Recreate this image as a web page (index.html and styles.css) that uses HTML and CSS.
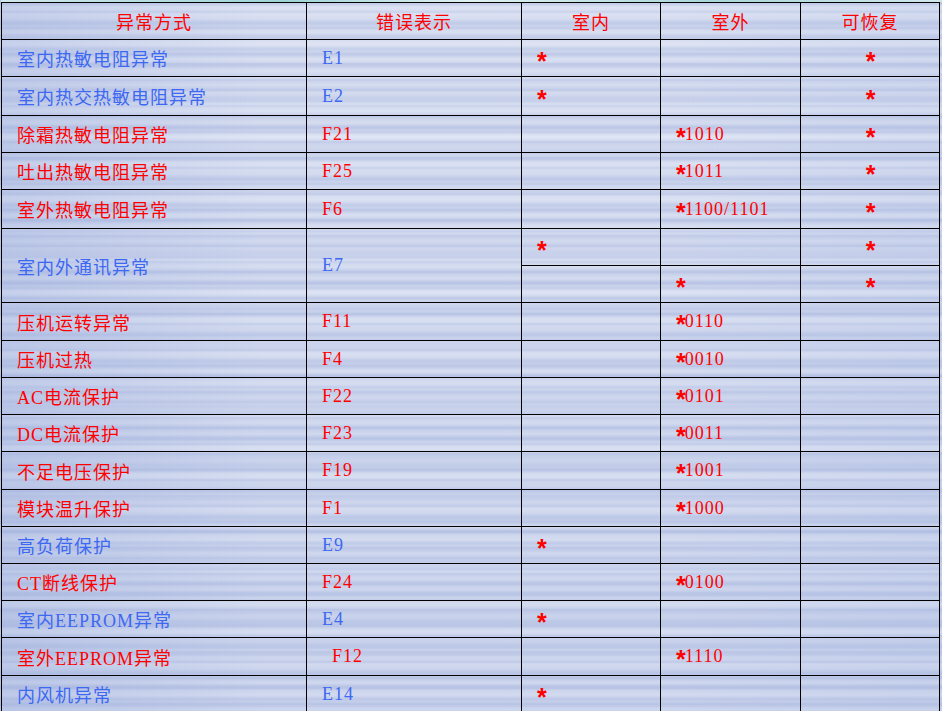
FILE: index.html
```html
<!DOCTYPE html>
<html lang="zh">
<head>
<meta charset="utf-8">
<link rel="stylesheet" href="styles.css">
</head>
<body>
<div class="page">
<div class="topstrip"></div>
<table class="codes">
<colgroup><col class="c1"><col class="c2"><col class="c3"><col class="c4"><col class="c5"></colgroup>
<tr class="h37"><th>异常方式</th><th>错误表示</th><th>室内</th><th>室外</th><th>可恢复</th></tr>
<tr class="h37 blue"><td>室内热敏电阻异常</td><td>E1</td><td class="red"><span class="ast">*</span></td><td></td><td class="ctr red"><span class="ast">*</span></td></tr>
<tr class="h39 blue"><td>室内热交热敏电阻异常</td><td>E2</td><td class="red"><span class="ast">*</span></td><td></td><td class="ctr red"><span class="ast">*</span></td></tr>
<tr class="h37 red"><td>除霜热敏电阻异常</td><td>F21</td><td></td><td><span class="ast">*</span>1010</td><td class="ctr"><span class="ast">*</span></td></tr>
<tr class="h37 red"><td>吐出热敏电阻异常</td><td>F25</td><td></td><td><span class="ast">*</span>1011</td><td class="ctr"><span class="ast">*</span></td></tr>
<tr class="h39 red"><td>室外热敏电阻异常</td><td>F6</td><td></td><td><span class="ast">*</span>1100/1101</td><td class="ctr"><span class="ast">*</span></td></tr>
<tr class="h37 blue"><td rowspan="2">室内外通讯异常</td><td rowspan="2">E7</td><td class="red"><span class="ast">*</span></td><td></td><td class="ctr red"><span class="ast">*</span></td></tr>
<tr class="h37 blue"><td></td><td class="red"><span class="ast">*</span></td><td class="ctr red"><span class="ast">*</span></td></tr>
<tr class="h38 red"><td>压机运转异常</td><td>F11</td><td></td><td><span class="ast">*</span>0110</td><td></td></tr>
<tr class="h37 red"><td>压机过热</td><td>F4</td><td></td><td><span class="ast">*</span>0010</td><td></td></tr>
<tr class="h37 red"><td>AC电流保护</td><td>F22</td><td></td><td><span class="ast">*</span>0101</td><td></td></tr>
<tr class="h37 red"><td>DC电流保护</td><td>F23</td><td></td><td><span class="ast">*</span>0011</td><td></td></tr>
<tr class="h38 red"><td>不足电压保护</td><td>F19</td><td></td><td><span class="ast">*</span>1001</td><td></td></tr>
<tr class="h37 red"><td>模块温升保护</td><td>F1</td><td></td><td><span class="ast">*</span>1000</td><td></td></tr>
<tr class="h37 blue"><td>高负荷保护</td><td>E9</td><td class="red"><span class="ast">*</span></td><td></td><td></td></tr>
<tr class="h37 red"><td>CT断线保护</td><td>F24</td><td></td><td><span class="ast">*</span>0100</td><td></td></tr>
<tr class="h37 blue"><td>室内EEPROM异常</td><td>E4</td><td class="red"><span class="ast">*</span></td><td></td><td></td></tr>
<tr class="h38 red"><td>室外EEPROM异常</td><td class="indent">F12</td><td></td><td><span class="ast">*</span>1110</td><td></td></tr>
<tr class="h37 blue"><td>内风机异常</td><td>E14</td><td class="red"><span class="ast">*</span></td><td></td><td></td></tr>
</table>
</div>
</body>
</html>
```
FILE: styles.css
```css
html, body {
  margin: 0;
  padding: 0;
  overflow: hidden;
  width: 942px;
  height: 711px;
}
body {
  background-color: #d5dcef;
  background-image:
    linear-gradient(90deg, rgba(140,160,215,0.28) 0%, rgba(150,170,220,0) 28%, rgba(150,170,220,0) 72%, rgba(150,170,220,0.12) 100%),
    linear-gradient(180deg, rgba(255,255,255,0) 0%, rgba(140,160,215,0.16) 100%),
    repeating-linear-gradient(180deg,
      rgba(170,185,225,0) 0px, rgba(170,185,225,0.4) 2px, rgba(170,185,225,0) 4px,
      rgba(235,240,250,0.4) 7px, rgba(235,240,250,0) 10px,
      rgba(160,175,220,0.35) 12px, rgba(160,175,220,0) 14px,
      rgba(225,230,245,0.35) 18px, rgba(225,230,245,0) 20px,
      rgba(175,190,228,0.4) 23px, rgba(175,190,228,0) 26px),
    repeating-linear-gradient(180deg,
      rgba(150,165,215,0) 0px, rgba(150,165,215,0.28) 4px, rgba(150,165,215,0) 8px,
      rgba(240,243,252,0.35) 13px, rgba(240,243,252,0) 17px,
      rgba(165,180,222,0.25) 24px, rgba(165,180,222,0) 31px);
  font-family: "Liberation Serif", "Noto Sans CJK SC", serif;
}
.page {
  padding: 0 0 0 1px;
}
.topstrip {
  height: 2px;
  background: linear-gradient(90deg, #cfe6ea, #9fd3d6 30%, #dff0f0 50%, #a9d6d8 75%, #cfe7ea);
}
.codes {
  border-collapse: collapse;
  table-layout: fixed;
  width: 939px;
}
.c1 { width: 305px; }
.c2 { width: 215px; }
.c3 { width: 139px; }
.c4 { width: 140px; }
.c5 { width: 139px; }
.codes th, .codes td {
  border: 1px solid #000;
  padding: 0 0 0 15px;
  font-size: 18px;
  font-weight: normal;
  letter-spacing: 1px;
  white-space: nowrap;
  vertical-align: middle;
  text-align: left;
}
.codes th {
  color: #ff0000;
  text-align: center;
  padding: 0;
}
.ast {
  font-family: "Liberation Sans", sans-serif;
  font-weight: bold;
  font-size: 25px;
  line-height: 10px;
  letter-spacing: 0;
  vertical-align: -6px;
  margin-right: -1px;
}
.h37 { height: 37px; }
.h38 { height: 38px; }
.h39 { height: 39px; }
.blue td { color: #3d68f2; }
.red td, .blue td.red { color: #ff0000; }
.codes td.ctr {
  text-align: center;
  padding: 0;
}
.codes td.indent {
  padding-left: 25px;
}
```
